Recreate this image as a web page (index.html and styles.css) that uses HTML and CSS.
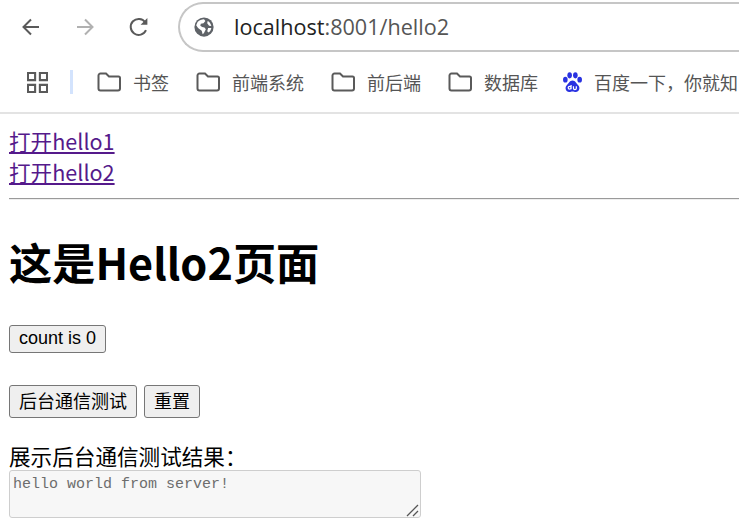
FILE: index.html
```html
<!DOCTYPE html>
<html lang="zh">
<head>
<meta charset="utf-8">
<title>Hello2</title>
<link rel="stylesheet" href="styles.css">
</head>
<body>
<header class="chrome">
  <div class="toolbar">
    <svg class="nav-icon nav-back" viewBox="0 0 24 24"><path d="M20 12H5M12 4.500 4.500 12l7.500 7.500"/></svg>
    <svg class="nav-icon nav-forward" viewBox="0 0 24 24"><path d="M4 12h15M12 4.500l7.500 7.500-7.500 7.500"/></svg>
    <svg class="nav-icon nav-reload" viewBox="0 0 24 24"><path d="M19 15.200A8 8 0 1 1 18.200 7.200"/><path class="solid" d="M20.400 3v6.800h-6.800z"/></svg>
    <div class="omnibox">
      <svg class="globe" viewBox="0 0 24 24"><circle cx="12" cy="12" r="10.500" fill="#5f6368"/><path fill="#fff" d="M5 6.500c2-2 4.500-3 7-3l1.500 2-2 2.500-3 .5-.5 2 2 1.500 2.500.5 1.500 2-2 4-1.500 1.500-1-4-4-3-2-3zM16 5.500c2 1 3.500 3 4 5.500l-2.500-.5-2-2.500zM16.500 13l3.500 0c-.3 2-1.500 4-3 5l-1.500-1.500z"/></svg>
      <span class="url"><span class="host">localhost</span><span class="port">:8001/hello2</span></span>
    </div>
  </div>
  <nav class="bookmarks">
    <svg class="apps" viewBox="0 0 22 22"><path d="M1 1h7.500v7.500H1zM13.500 1H21v7.500h-7.500zM1 13.500h7.500V21H1zM13.500 13.500H21V21h-7.500z"/></svg>
    <span class="divider"></span>
    <a class="bookmark bookmark-first"><svg class="folder" viewBox="0 0 24 20"><path d="M1.500 3.500a2 2 0 0 1 2-2h5.500l3 3h9.500a1.500 1.500 0 0 1 1.500 1.500v10.500a2 2 0 0 1-2 2h-17.500a2 2 0 0 1-2-2z"/></svg>书签</a>
    <a class="bookmark"><svg class="folder" viewBox="0 0 24 20"><path d="M1.500 3.500a2 2 0 0 1 2-2h5.500l3 3h9.500a1.500 1.500 0 0 1 1.500 1.500v10.500a2 2 0 0 1-2 2h-17.500a2 2 0 0 1-2-2z"/></svg>前端系统</a>
    <a class="bookmark"><svg class="folder" viewBox="0 0 24 20"><path d="M1.500 3.500a2 2 0 0 1 2-2h5.500l3 3h9.500a1.500 1.500 0 0 1 1.500 1.500v10.500a2 2 0 0 1-2 2h-17.500a2 2 0 0 1-2-2z"/></svg>前后端</a>
    <a class="bookmark"><svg class="folder" viewBox="0 0 24 20"><path d="M1.500 3.500a2 2 0 0 1 2-2h5.500l3 3h9.500a1.500 1.500 0 0 1 1.500 1.500v10.500a2 2 0 0 1-2 2h-17.500a2 2 0 0 1-2-2z"/></svg>数据库</a>
    <a class="bookmark bookmark-baidu"><svg class="paw" viewBox="0 0 22 22"><ellipse cx="3.500" cy="8" rx="2.400" ry="3"/><ellipse cx="8" cy="3.500" rx="2.400" ry="3.200"/><ellipse cx="14" cy="3.500" rx="2.400" ry="3.200"/><ellipse cx="18.500" cy="8" rx="2.400" ry="3"/><path d="M11 9c3 0 4 3 6 5 2.500 2.500 1 7-2.500 7-1.500 0-2.300-.5-3.500-.5s-2 .5-3.500.5c-3.500 0-5-4.500-2.500-7 2-2 3-5 6-5z"/><path class="du" d="M6.500 16.500a1.500 1.500 0 1 0 3 0 1.500 1.500 0 1 0-3 0M9.500 13.500v4.500M12 15v2a1.500 1.500 0 0 0 3 0v-2"/></svg>百度一下，你就知</a>
  </nav>
</header>
<main class="page">
  <a class="link" href="#a">打开hello1</a>
  <a class="link" href="#b">打开hello2</a>
  <hr class="rule">
  <h1 class="title">这是Hello2页面</h1>
  <div class="row row-count"><button class="btn btn-count">count is 0</button></div>
  <div class="row row-actions"><button class="btn">后台通信测试</button><button class="btn">重置</button></div>
  <div class="result-label">展示后台通信测试结果：</div>
  <div class="result-box">
    <textarea class="result" readonly>hello world from server!</textarea>
    <svg class="grip" viewBox="0 0 14 14"><path d="M13 2 2 13M13 8l-5 5"/></svg>
  </div>
</main>
</body>
</html>
```
FILE: styles.css
```css
* { box-sizing: border-box; }
html, body { margin: 0; padding: 0; }
body {
  width: 739px;
  height: 520px;
  overflow: hidden;
  background: #fff;
  font-family: "Noto Sans CJK SC", "Noto Sans", sans-serif;
}
.chrome {
  height: 114px;
  border-bottom: 2px solid #e3e3e3;
  overflow: hidden;
}
.toolbar {
  height: 53px;
  display: flex;
  align-items: center;
  padding-left: 19px;
}
.nav-icon {
  width: 24px;
  height: 24px;
  flex: none;
  fill: none;
  stroke: #5a5a5a;
  stroke-width: 2;
}
.nav-forward { margin-left: 30px; stroke: #b1b1b1; }
.nav-reload { margin-left: 30px; }
.solid { fill: #5a5a5a; stroke: none; }
.omnibox {
  flex: none;
  width: 600px;
  height: 50px;
  margin-left: 27px;
  border: 2px solid #c6c6c6;
  border-right: 0;
  border-radius: 25px 0 0 25px;
  display: flex;
  align-items: center;
  padding-left: 13px;
}
.globe { width: 22px; height: 22px; flex: none; }
.url {
  margin-left: 19px;
  font-family: "Open Sans", sans-serif;
  font-size: 21.600px;
}
.host { color: #222; }
.port { color: #555; }
.bookmarks {
  height: 59px;
  display: flex;
  align-items: center;
  padding: 0 0 1px 27px;
  color: #555;
  font-size: 18px;
  white-space: nowrap;
}
.apps { width: 21px; height: 21px; flex: none; fill: none; stroke: #5a5a5a; stroke-width: 2.200; }
.divider { width: 3px; height: 24px; margin-left: 22px; background: #d3e3fd; flex: none; }
.bookmark { display: flex; align-items: center; flex: none; margin-left: 27px; }
.bookmark-first { margin-left: 24px; }
.folder { width: 24px; height: 20px; margin-right: 12px; flex: none; fill: none; stroke: #5a5a5a; stroke-width: 2; }
.bookmark-baidu { margin-left: 24px; }
.paw { width: 21px; height: 21px; margin-right: 11px; flex: none; fill: #2932e1; }
.du { fill: none; stroke: #fff; stroke-width: 1.300; }
.page { padding: 11px 0 0 9px; }
.link {
  display: block;
  width: max-content;
  height: 31px;
  line-height: 31px;
  font-size: 21.600px;
  color: #551a8b;
  text-decoration: underline;
}
.rule {
  margin: 11px 0 0;
  height: 2px;
  border: 0;
  border-top: 1px solid #9a9a9a;
  border-bottom: 1px solid #eee;
}
.title {
  margin: 30px 0 0;
  font-size: 43.200px;
  line-height: 62px;
  font-weight: 700;
  color: #000;
}
.row { display: flex; gap: 7px; }
.row-count { margin-top: 33px; }
.row-actions { margin-top: 32px; }
.btn {
  font-family: "Liberation Sans", "Noto Sans CJK SC", sans-serif;
  font-size: 18px;
  color: #000;
  background: #efefef;
  border: 1px solid #767676;
  border-radius: 3px;
  padding: 1px 9px 0;
  height: 33px;
  line-height: 1;
}
.row-count .btn { height: 28px; padding: 0 9px 2px; }
.result-label {
  margin-top: 22px;
  font-size: 21.600px;
  line-height: 31px;
  color: #000;
  height: 30px;
}
.result-box {
  position: relative;
  width: 412px;
  height: 48px;
}
.result {
  display: block;
  width: 100%;
  height: 100%;
  margin: 0;
  padding: 4px 3px;
  border: 1px solid #cecece;
  border-radius: 3px;
  background: #f7f7f7;
  color: #6d6d6d;
  font-family: "Liberation Mono", monospace;
  font-size: 15px;
  line-height: 20px;
  outline: none;
  resize: none;
}
.grip {
  position: absolute;
  right: 2px;
  bottom: 1px;
  width: 14px;
  height: 14px;
  fill: none;
  stroke: #555;
  stroke-width: 1.300;
}
```
